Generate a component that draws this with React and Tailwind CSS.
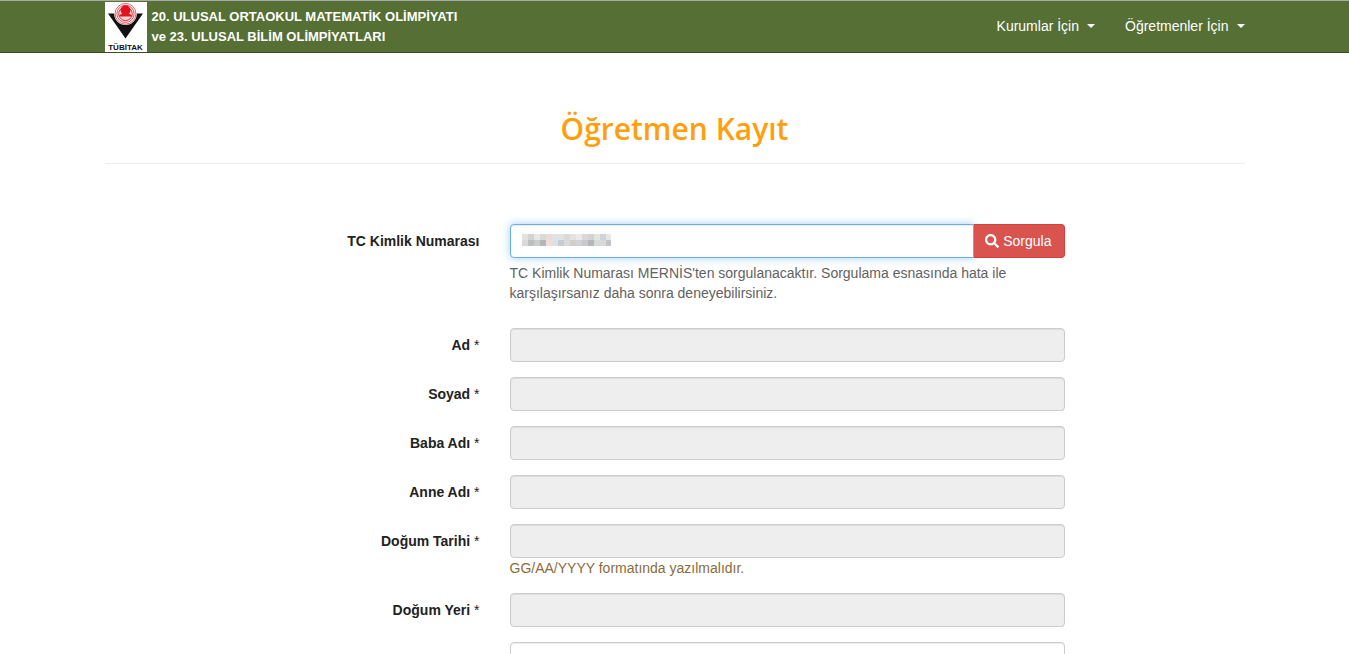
import { FaSearch } from "react-icons/fa";

const topCells = ["#e2e2de", "#d3d3d3", "#e7e9e9", "#d9d9dc", "#e8dcd6", "#dde3e6", "#dfe4e7", "#dadada", "#e4e2e1", "#e9eaeb", "#dad7d8", "#d2d3d6", "#e4e4e1", "#cfd3d8", "#e6e7e7"];
const bottomCells = ["#dcdad8", "#bcbfbe", "#cbcdcc", "#b5b4b9", "#ecdfda", "#dbe2e6", "#c7ccd0", "#dadada", "#d2cfcb", "#d3d3d5", "#c8caca", "#b8b4b7", "#d3dcda", "#dbd8d7", "#c1c4c9"];

const fields = [
  { id: "ad", label: "Ad" },
  { id: "soyad", label: "Soyad" },
  { id: "baba", label: "Baba Adı" },
  { id: "anne", label: "Anne Adı" },
  { id: "dogum-tarihi", label: "Doğum Tarihi", hint: "GG/AA/YYYY formatında yazılmalıdır." },
  { id: "dogum-yeri", label: "Doğum Yeri" },
];

function Logo() {
  return (
    <svg viewBox="0 0 42 50" className="h-[50px] w-[42px] shrink-0" role="img" aria-label="TÜBİTAK">
      <rect width="42" height="50" fill="#fff" />
      <path d="M3 11.5H38L20.5 36.5Z" fill="#111" />
      <circle cx="20.5" cy="11.8" r="11.3" fill="#fff" />
      <circle cx="20.5" cy="11.8" r="10.4" fill="none" stroke="#e2363f" strokeWidth="0.8" />
      <circle cx="20.5" cy="11.8" r="8.6" fill="none" stroke="#e2363f" strokeWidth="0.9" />
      <circle cx="20.5" cy="11.8" r="6.8" fill="#fbd5d7" stroke="#e1121d" strokeWidth="0.9" />
      <circle cx="20.5" cy="8.2" r="4.9" fill="#e1121d" />
      <path d="M13.5 14.5Q15 12.2 18 11.5H23Q26 12.2 27.5 14.5Z" fill="#e1121d" />
      <text x="20.5" y="48" textAnchor="middle" fontFamily="'Liberation Sans', Arial, sans-serif" fontSize="8" fontWeight="700" fill="#111">TÜBİTAK</text>
    </svg>
  );
}

function NavMenu({ children }) {
  return (
    <button type="button" className="flex items-center gap-2 text-white">
      {children}
      <svg viewBox="0 0 8 4" className="h-1 w-2" aria-hidden="true">
        <path d="M0 0H8L4 4Z" fill="currentColor" />
      </svg>
    </button>
  );
}

function Row({ id, label, required, children }) {
  return (
    <div className="mb-[15px] grid grid-cols-[25fr_37fr_10fr] gap-x-[30px]">
      <label htmlFor={id} className="pt-[7px] text-right font-bold text-[#222]">
        {label}
        {required && <span className="font-normal"> *</span>}
      </label>
      <div>{children}</div>
    </div>
  );
}

export default function App() {
  return (
    <div className="bg-white font-['Liberation_Sans',Arial,sans-serif] text-sm leading-5 text-[#222]">
      <header className="border-t border-b border-t-[#a9a9a9] border-b-[#3c4d26] bg-[#556f35] pt-px">
        <div className="mx-auto flex max-w-[1170px] items-center justify-between px-[15px]">
          <a href="#" className="flex items-center gap-[5px] text-[13px] leading-5 font-bold text-white">
            <Logo />
            <span>
              20. ULUSAL ORTAOKUL MATEMATİK OLİMPİYATI
              <br />
              ve 23. ULUSAL BİLİM OLİMPİYATLARI
            </span>
          </a>
          <nav className="flex gap-[30px] pb-0.5">
            <NavMenu>Kurumlar İçin</NavMenu>
            <NavMenu>Öğretmenler İçin</NavMenu>
          </nav>
        </div>
      </header>

      <main className="mx-auto max-w-[1170px] px-[15px]">
        <h1 className="mt-10 mb-[60px] border-b border-[#eee] pt-[18px] pb-[17px] text-center font-['Open_Sans',sans-serif] text-[30px] leading-[35px] font-semibold text-[#ff9f0f]">
          Öğretmen Kayıt
        </h1>
        <form>
          <Row id="tc" label="TC Kimlik Numarası">
            <div className="flex">
              <div className="relative min-w-0 flex-1">
                <input
                  id="tc"
                  type="text"
                  className="block h-[34px] w-full rounded-l border border-[#66afe9] bg-white px-3 shadow-[inset_0_1px_1px_rgba(0,0,0,0.075),0_0_8px_rgba(102,175,233,0.6)] outline-none"
                />
                <svg viewBox="0 0 89 12" className="pointer-events-none absolute top-2.5 left-3 h-3 w-[89px]" shapeRendering="crispEdges" aria-hidden="true">
                  {topCells.map((c, i) => <rect key={i} x={i * 6} y="0" width="6" height="6" fill={c} />)}
                  {bottomCells.map((c, i) => <rect key={i} x={i * 6} y="6" width="6" height="6" fill={c} />)}
                </svg>
              </div>
              <button type="button" className="relative flex h-[34px] items-center gap-1 rounded-r border border-l-0 border-[#d43f3a] bg-[#d9534f] pr-3 pl-[11px] text-white">
                <FaSearch className="size-3.5" aria-hidden="true" />
                Sorgula
              </button>
            </div>
            <p className="mt-[5px] mb-2.5 text-[#626262]">
              TC Kimlik Numarası MERNİS'ten sorgulanacaktır. Sorgulama esnasında hata ile karşılaşırsanız daha sonra deneyebilirsiniz.
            </p>
          </Row>
          {fields.map((f) => (
            <Row key={f.id} id={f.id} label={f.label} required>
              <input
                id={f.id}
                type="text"
                disabled
                className="block h-[34px] w-full rounded border border-[#ccc] bg-[#eee] px-3 shadow-[inset_0_1px_1px_rgba(0,0,0,0.075)]"
              />
              {f.hint && <p className="text-[#8a6d3b]">{f.hint}</p>}
            </Row>
          ))}
          <div className="grid h-3 grid-cols-[25fr_37fr_10fr] gap-x-[30px] overflow-hidden">
            <input
              type="text"
              aria-label="E-posta"
              className="col-start-2 block h-[34px] w-full rounded border border-[#ccc] bg-white px-3 shadow-[inset_0_1px_1px_rgba(0,0,0,0.075)]"
            />
          </div>
        </form>
      </main>
    </div>
  );
}
